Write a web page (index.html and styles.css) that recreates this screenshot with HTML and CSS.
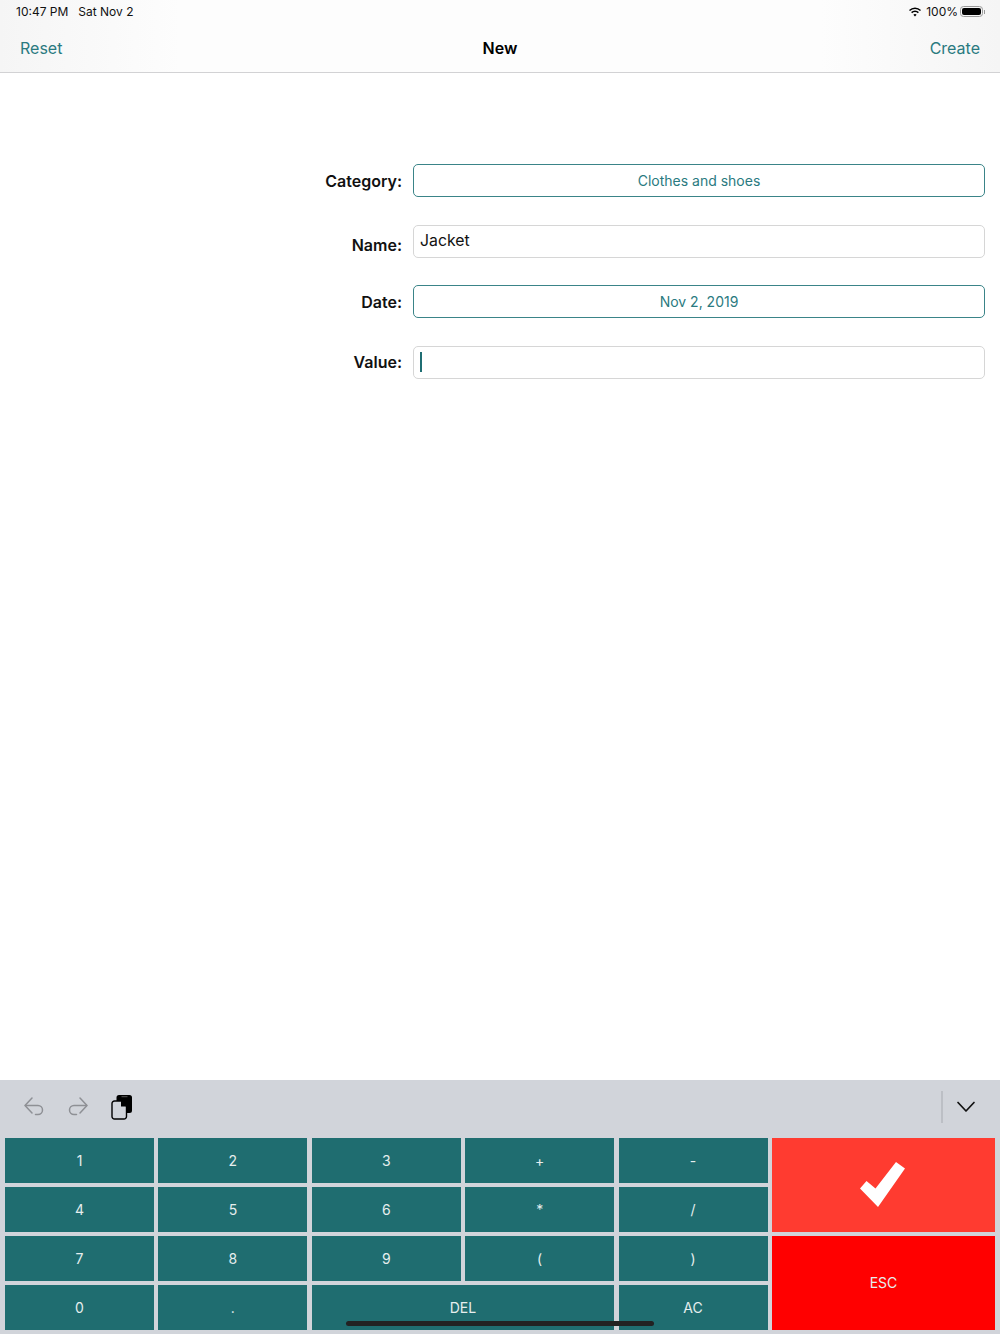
FILE: index.html
```html
<!DOCTYPE html>
<html lang="en">
<head>
<meta charset="utf-8">
<title>New</title>
<link rel="stylesheet" href="styles.css">
</head>
<body>
<div class="page">
  <header class="top">
    <div class="status">
      <div class="status-left"><span>10:47 PM</span><span>Sat Nov 2</span></div>
      <div class="status-right">
        <svg class="wifi" width="14" height="10" viewBox="0 0 15 11"><path d="M7.500 2.200c2.100 0 4 .8 5.500 2.200l1.100-1.200A9.600 9.600 0 0 0 7.500.5 9.600 9.600 0 0 0 .9 3.200L2 4.400a8 8 0 0 1 5.500-2.200z"/><path d="M7.500 5.600c1.200 0 2.300.4 3.200 1.200l1.100-1.200a6.300 6.300 0 0 0-8.600 0l1.100 1.200c.9-.8 2-1.200 3.200-1.200z"/><path d="M7.500 7.800c-.7 0-1.300.3-1.800.7l1.800 2 1.800-2c-.5-.4-1.100-.7-1.800-.7z"/></svg>
        <span>100%</span>
        <span class="battery"><span class="battery-fill"></span></span><span class="battery-tip"></span>
      </div>
    </div>
    <nav class="nav">
      <a class="nav-link">Reset</a>
      <h1 class="nav-title">New</h1>
      <a class="nav-link nav-link-end">Create</a>
    </nav>
  </header>

  <main class="form">
    <div class="row">
      <label class="label">Category:</label>
      <div class="field field-btn">Clothes and shoes</div>
    </div>
    <div class="row">
      <label class="label label-low">Name:</label>
      <div class="field field-input">Jacket</div>
    </div>
    <div class="row">
      <label class="label">Date:</label>
      <div class="field field-btn">Nov 2, 2019</div>
    </div>
    <div class="row">
      <label class="label">Value:</label>
      <div class="field field-input"><span class="caret"></span></div>
    </div>
  </main>

  <section class="kb">
    <div class="toolbar">
      <div class="tools">
        <svg width="22" height="22" viewBox="0 0 22 22" fill="none" stroke="#8e9095" stroke-width="1.500" stroke-linecap="round" stroke-linejoin="round"><path d="M9 2 2 9.500 9 17"/><path d="M2.500 9.500H15a4.500 4.500 0 0 1 0 9h-2.500"/></svg>
        <svg width="22" height="22" viewBox="0 0 22 22" fill="none" stroke="#8e9095" stroke-width="1.500" stroke-linecap="round" stroke-linejoin="round"><path d="M13 2l7 7.500L13 17"/><path d="M19.500 9.500H7a4.500 4.500 0 0 0 0 9h2.500"/></svg>
        <svg width="22" height="26" viewBox="0 0 22 26"><path d="M8 1h10.500A2.500 2.500 0 0 1 21 3.500v13a2.500 2.500 0 0 1-2.500 2.500H15V12L9.500 7H5.500V3.500A2.500 2.500 0 0 1 8 1z" fill="#000"/><path d="M10.500 2.200h6v1h-6z" fill="#555"/><path d="M3.500 7h6.800l5.200 5.200v10.300a2.500 2.500 0 0 1-2.500 2.500H3.500A2.500 2.500 0 0 1 1 22.500V9.500A2.500 2.500 0 0 1 3.500 7z" fill="#d1d4da" stroke="#000" stroke-width="1.400"/><path d="M10 7v5.500h5.500z" fill="#000"/></svg>
      </div>
      <div class="toolbar-end">
        <span class="divider"></span>
        <svg width="20" height="12" viewBox="0 0 20 12" fill="none" stroke="#111" stroke-width="1.700" stroke-linecap="round" stroke-linejoin="round"><path d="M2 1.500 10 10l8-8.500"/></svg>
      </div>
    </div>
    <div class="keys">
      <div class="key">1</div><div class="key">2</div><div class="key">3</div><div class="key">+</div><div class="key">-</div>
      <div class="key key-ok">
        <svg width="48" height="48" viewBox="0 0 48 48"><path d="M1 27.500 7.500 20l9 7.500L37 1l9 6.500L19 46z" fill="#fff"/></svg>
      </div>
      <div class="key">4</div><div class="key">5</div><div class="key">6</div><div class="key">*</div><div class="key">/</div>
      <div class="key">7</div><div class="key">8</div><div class="key">9</div><div class="key">(</div><div class="key">)</div>
      <div class="key key-esc">ESC</div>
      <div class="key">0</div><div class="key">.</div><div class="key key-del">DEL</div><div class="key">AC</div>
    </div>
    <div class="home"></div>
  </section>
</div>
</body>
</html>
```
FILE: styles.css
```css
* { box-sizing: border-box; }
html, body { margin: 0; padding: 0; }
body { font-family: Inter, "Liberation Sans", sans-serif; background: #fff; color: #000; }
.page { width: 1000px; height: 1334px; display: flex; flex-direction: column; overflow: hidden; }

.top { height: 73px; border-bottom: 1px solid #d2d2d4; background: linear-gradient(90deg, #f5f5f5 0, #fdfdfd 18%, #fdfdfd 82%, #f5f5f5 100%); }
.status { height: 24px; padding: 0 15px 1px 16px; display: flex; justify-content: space-between; align-items: center; font-size: 12px; color: #111; }
.status-left { display: flex; gap: 10px; }
.status-right { display: flex; align-items: center; gap: 2px; }
.wifi { fill: #000; margin-right: 2px; }
.battery { width: 23px; height: 11px; border: 1px solid #9a9a9a; border-radius: 3.500px; padding: 1px; display: block; }
.battery-fill { display: block; width: 100%; height: 100%; background: #000; border-radius: 2px; }
.battery-tip { width: 1px; height: 4px; background: #999; margin-left: -1px; }
.nav { height: 48px; padding: 0 20px; display: grid; grid-template-columns: 1fr auto 1fr; align-items: center; }
.nav-link { font-size: 16px; color: #2a7a80; }
.nav-link-end { justify-self: end; }
.nav-title { margin: 0; font-size: 16px; font-weight: 600; color: #000; }

.form { flex: 1; padding: 91px 15px 0 0; display: flex; flex-direction: column; gap: 27.670px; }
.row { display: grid; grid-template-columns: 402px 573px; column-gap: 10px; align-items: center; }
.label { text-align: right; font-size: 16px; font-weight: 600; color: #111; }
.label-low { padding-top: 7px; }
.field { height: 33px; border-radius: 5px; display: flex; align-items: center; margin-left: 1px; }
.field-btn { border: 1px solid #3a8488; color: #2a7a80; justify-content: center; font-size: 14px; }
.field-input { border: 1px solid #d6d6d6; padding: 0 6px 2px; font-size: 15.800px; color: #111; }
.caret { display: block; width: 2px; height: 20px; background: #1f6e73; margin-top: 2px; }

.kb { position: relative; height: 254px; background: #d1d4da; }
.toolbar { height: 58px; padding: 0 24px 4px 23px; display: flex; justify-content: space-between; align-items: center; }
.tools { display: flex; align-items: center; gap: 22px; }
.toolbar-end { display: flex; align-items: center; gap: 13px; }
.divider { width: 2px; height: 32px; background: #bcbfc5; }
.keys { display: grid; grid-template-columns: repeat(5, 149px) 223px; grid-auto-rows: 44.500px; gap: 4.500px 4.400px; padding: 0 5px; }
.key { background: #1f6d70; color: #e6eeee; display: flex; align-items: center; justify-content: center; font-size: 14px; }
.key-ok { grid-column: 6; grid-row: 1 / span 2; background: #ff3b30; }
.key-esc { grid-column: 6; grid-row: 3 / span 2; background: #ff0000; }
.key-del { grid-column: 3 / span 2; }
.home { position: absolute; left: 346px; bottom: 8px; width: 308px; height: 5px; border-radius: 3px; background: #222; }
```
